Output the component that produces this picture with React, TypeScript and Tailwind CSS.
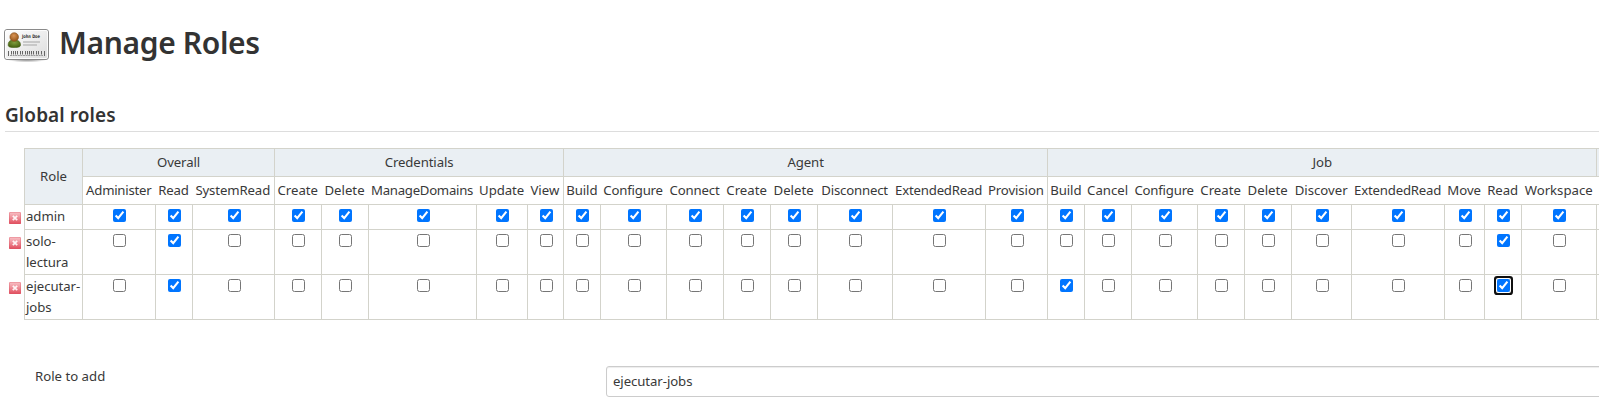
const GROUPS = [
  {
    name: 'Overall',
    cols: [['Administer', 73], ['Read', 37], ['SystemRead', 82]],
  },
  {
    name: 'Credentials',
    cols: [['Create', 47], ['Delete', 47], ['ManageDomains', 108], ['Update', 51], ['View', 36]],
  },
  {
    name: 'Agent',
    cols: [
      ['Build', 37], ['Configure', 66], ['Connect', 57], ['Create', 47],
      ['Delete', 47], ['Disconnect', 75], ['ExtendedRead', 93], ['Provision', 62],
    ],
  },
  {
    name: 'Job',
    cols: [
      ['Build', 37], ['Cancel', 47], ['Configure', 66], ['Create', 47], ['Delete', 47],
      ['Discover', 60], ['ExtendedRead', 93], ['Move', 40], ['Read', 37], ['Workspace', 75],
    ],
  },
] as { name: string; cols: [string, number][] }[];

const COLS = GROUPS.flatMap((g) => g.cols.map(([label, width]) => ({ group: g.name, label, width })));

const TRACKING: Record<string, string> = {
  Administer: 'tracking-[-0.25px]',
  ManageDomains: 'tracking-[-0.28px]',
  Configure: 'tracking-[-0.2px]',
  Disconnect: 'tracking-[-0.2px]',
  ExtendedRead: 'tracking-[-0.2px]',
  SystemRead: 'tracking-[-0.12px]',
  Provision: 'tracking-[-0.1px]',
  Connect: 'tracking-[-0.15px]',
  Build: 'tracking-[-0.1px]',
  Update: 'tracking-[-0.1px]',
  Read: 'tracking-[-0.1px]',
};

const ROLES = [
  { name: 'admin', height: 'h-[25px]', has: () => true },
  { name: 'solo-lectura', height: 'h-[45px]', has: (k: string) => ['Overall.Read', 'Job.Read'].includes(k) },
  { name: 'ejecutar-jobs', height: 'h-[45px]', has: (k: string) => ['Overall.Read', 'Job.Build', 'Job.Read'].includes(k) },
];

function BadgeIcon() {
  return (
    <svg width="48" height="48" viewBox="0 0 48 48" className="shrink-0">
      <defs>
        <linearGradient id="card" x1="0" y1="0" x2="1" y2="1">
          <stop offset="0" stopColor="#ffffff" />
          <stop offset="1" stopColor="#dcdcdc" />
        </linearGradient>
        <radialGradient id="head" cx="0.45" cy="0.35" r="0.7">
          <stop offset="0" stopColor="#d99454" />
          <stop offset="1" stopColor="#8f4f14" />
        </radialGradient>
        <radialGradient id="body" cx="0.5" cy="0.35" r="0.7">
          <stop offset="0" stopColor="#7f9c3c" />
          <stop offset="1" stopColor="#3f5c0c" />
        </radialGradient>
        <radialGradient id="shade">
          <stop offset="0.3" stopColor="#000" stopOpacity="0.35" />
          <stop offset="1" stopColor="#000" stopOpacity="0" />
        </radialGradient>
      </defs>
      <ellipse cx="24" cy="39.500" rx="20" ry="3" fill="url(#shade)" />
      <rect x="1.500" y="9.500" width="44" height="30" rx="2.500" fill="url(#card)" stroke="#8a8a8a" />
      <rect x="2.500" y="10.500" width="42" height="28" rx="1.500" fill="none" stroke="#fff" strokeOpacity="0.8" />
      <path d="M5.200 25C5.200 21 7.500 20 11 20s6.500 1 6.500 5C17.500 27 15 27.500 11.200 27.500S5.200 27 5.200 25z" fill="url(#body)" stroke="#415c12" strokeWidth="0.6" />
      <circle cx="11.200" cy="17" r="4.300" fill="url(#head)" stroke="#87501c" strokeWidth="0.6" />
      <text x="19" y="18" fontFamily="DejaVu Sans, sans-serif" fontSize="4.800" fontWeight="700" fill="#333" textLength="18" lengthAdjust="spacingAndGlyphs">John Doe</text>
      <path d="M20 22h17M20 25h14" stroke="#bdbdbd" strokeWidth="1.300" />
      <path d="M5.500 31v5M8.500 31v3.500M10.500 31v3.500M12.500 31v3.500M14.500 31v3.500M17.500 31v3.500M19.500 31v3.500M22.500 31v3.500M24.500 31v3.500M26.500 31v3.500M28.500 31v3.500M30.500 31v3.500M33.500 31v3.500M35.500 31v3.500M38.500 31v3.500M41.500 31v5" stroke="#666" strokeWidth="1" />
      <path d="M7 35.500h33" stroke="#999" strokeWidth="1" strokeDasharray="2 0.600" />
    </svg>
  );
}

function DeleteIcon() {
  return (
    <svg width="12" height="12" viewBox="0 0 12 12" className="mt-[7px] ml-0.5 block">
      <defs>
        <linearGradient id="red" x1="0" y1="0" x2="0" y2="1">
          <stop offset="0" stopColor="#f8c3c8" />
          <stop offset="0.5" stopColor="#ee8b95" />
          <stop offset="1" stopColor="#e04a5b" />
        </linearGradient>
      </defs>
      <rect width="12" height="12" rx="0.800" fill="url(#red)" />
      <rect x="0.500" y="0.500" width="11" height="11" rx="0.500" fill="none" stroke="#dc5867" strokeOpacity="0.35" />
      <path d="M3.800 3.800l4.400 4.400M8.200 3.800l-4.400 4.400" stroke="#fff" strokeOpacity="0.9" strokeWidth="1.700" />
    </svg>
  );
}

export default function App() {
  return (
    <div className="h-[414px] w-[1599px] overflow-hidden bg-white font-['Noto_Sans',sans-serif] text-[13.2px] leading-[21px] text-[#393939]">
      <header className="flex h-[92px] items-start gap-2 pt-[20px] pl-[3px]">
        <BadgeIcon />
        <h1 className="text-[30px] leading-[45px] font-semibold tracking-[-0.35px] whitespace-nowrap text-[#333]">Manage Roles</h1>
      </header>

      <h2 className="ml-[5px] h-[40px] border-b border-[#ddd] pt-[9px] text-[19px] leading-[28px] font-semibold tracking-[0.08px] whitespace-nowrap text-[#333]">
        Global roles
      </h2>

      <table className="mt-4 ml-[7px] w-[1627px] table-fixed border-collapse">
        <colgroup>
          <col style={{ width: 17 }} />
          <col style={{ width: 58 }} />
          {COLS.map((c, i) => (
            <col key={i} style={{ width: c.width }} />
          ))}
          <col style={{ width: 37 }} />
        </colgroup>
        <tbody>
          <tr className="h-[28px]">
            <td rowSpan={2} />
            <td rowSpan={2} className="border border-[#d3d3cb] bg-[#eaeff3] p-0 pl-px text-center">Role</td>
            {GROUPS.map((g) => (
              <td key={g.name} colSpan={g.cols.length} className="border border-[#d3d3cb] bg-[#eaeff3] p-0 pl-px text-center tracking-[-0.1px]">
                {g.name}
              </td>
            ))}
            <td className="border border-[#d3d3cb] bg-[#eaeff3]" />
          </tr>
          <tr className="h-[28px]">
            {COLS.map((c, i) => (
              <td
                key={i}
                className={`${i === 0 || COLS[i - 1].group !== c.group ? 'border-l' : ''} ${TRACKING[c.label] ?? ''} border-b border-[#d3d3cb] p-0 text-center whitespace-nowrap`}
              >
                {c.label}
              </td>
            ))}
            <td className="border-b border-[#d3d3cb]" />
          </tr>
          {ROLES.map((role) => (
            <tr key={role.name} className={role.height}>
              <td className="p-0 align-top"><DeleteIcon /></td>
              <td className="border border-[#d3d3cb] p-0 pt-px pl-[1.5px] align-top tracking-[-0.05px]">{role.name}</td>
              {COLS.map((c, i) => {
                const key = `${c.group}.${c.label}`;
                const focused = role.name === 'ejecutar-jobs' && key === 'Job.Read';
                return (
                  <td key={i} className={(c.width % 2 ? 'pl-px' : 'pl-0.5') + ' border border-[#d3d3cb] py-0 pr-0 align-top'}>
                    <span
                      className={'mx-auto mt-1 block h-[13px] w-[13px]' + (focused ? ' rounded-[1px] shadow-[0_0_0_1px_#fff,0_0_0_3px_#101010]' : '')}
                    >
                      <input type="checkbox" defaultChecked={role.has(key)} className="block h-[13px] w-[13px] outline-none" />
                    </span>
                  </td>
                );
              })}
              <td className="border border-[#d3d3cb]" />
            </tr>
          ))}
        </tbody>
      </table>

      <div className="mt-[46px] flex">
        <label htmlFor="role" className="ml-[35px] w-[571px] shrink-0 whitespace-nowrap">Role to add</label>
        <input
          id="role"
          defaultValue="ejecutar-jobs"
          className="h-[31px] w-[1020px] shrink-0 rounded-[3px] border border-[#ccc] px-1.5 pb-0.5 tracking-[-0.08px] shadow-[inset_0_1px_1px_rgba(0,0,0,0.075)] outline-none"
        />
      </div>
    </div>
  );
}
